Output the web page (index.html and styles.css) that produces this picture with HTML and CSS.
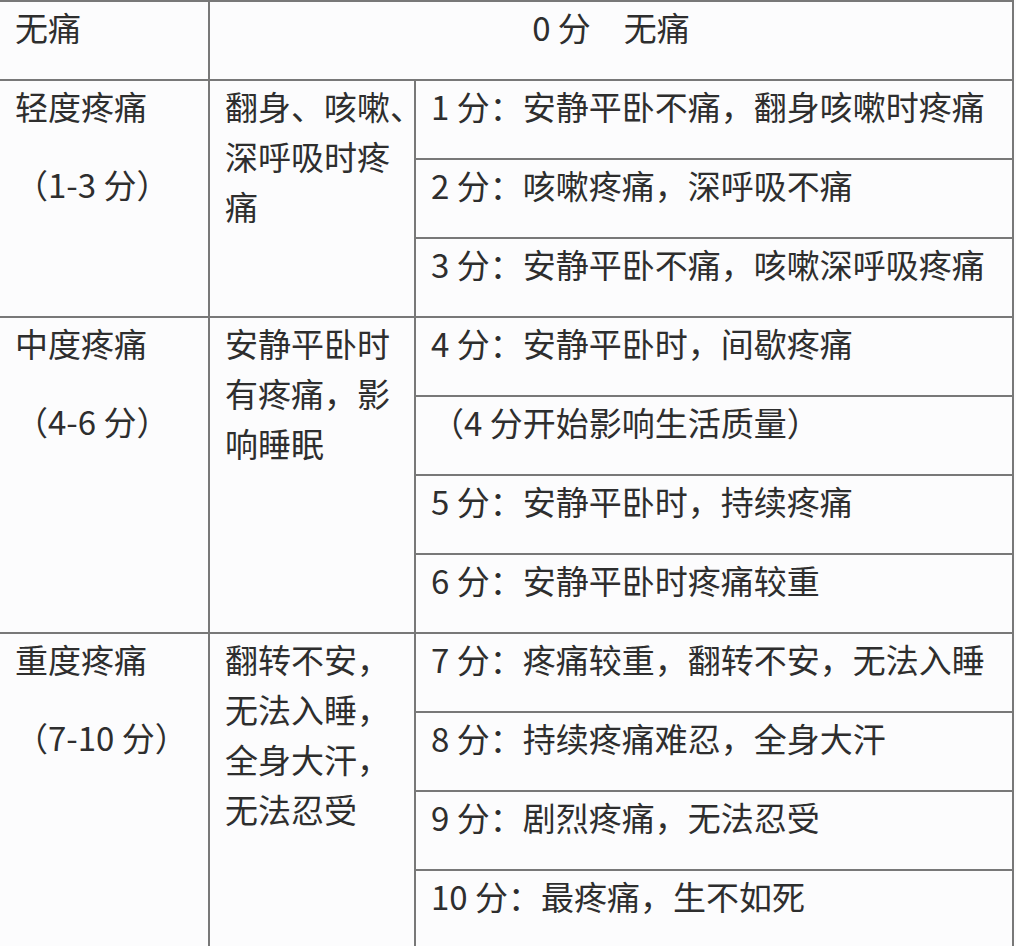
FILE: index.html
```html
<!DOCTYPE html>
<html lang="zh-CN">
<head>
<meta charset="utf-8">
<title>疼痛评分</title>
<link rel="stylesheet" href="styles.css">
</head>
<body>
<div class="table">
  <div class="cell c1 r1">无痛</div>
  <div class="cell span23 r1 center">0 分　无痛</div>

  <div class="cell c1 g1"><p>轻度疼痛</p><p class="range">（1-3 分）</p></div>
  <div class="cell c2 g1">翻身、咳嗽、<br>深呼吸时疼<br>痛</div>
  <div class="cell c3">1 分：安静平卧不痛，翻身咳嗽时疼痛</div>
  <div class="cell c3">2 分：咳嗽疼痛，深呼吸不痛</div>
  <div class="cell c3">3 分：安静平卧不痛，咳嗽深呼吸疼痛</div>

  <div class="cell c1 g2"><p>中度疼痛</p><p class="range">（4-6 分）</p></div>
  <div class="cell c2 g2">安静平卧时<br>有疼痛，影<br>响睡眠</div>
  <div class="cell c3">4 分：安静平卧时，间歇疼痛</div>
  <div class="cell c3">（4 分开始影响生活质量）</div>
  <div class="cell c3">5 分：安静平卧时，持续疼痛</div>
  <div class="cell c3">6 分：安静平卧时疼痛较重</div>

  <div class="cell c1 g3"><p>重度疼痛</p><p class="range">（7-10 分）</p></div>
  <div class="cell c2 g3">翻转不安，<br>无法入睡，<br>全身大汗，<br>无法忍受</div>
  <div class="cell c3">7 分：疼痛较重，翻转不安，无法入睡</div>
  <div class="cell c3">8 分：持续疼痛难忍，全身大汗</div>
  <div class="cell c3">9 分：剧烈疼痛，无法忍受</div>
  <div class="cell c3">10 分：最疼痛，生不如死</div>
</div>
</body>
</html>
```
FILE: styles.css
```css
html, body {
  margin: 0;
  padding: 0;
  background: #fcfcfd;
}

body {
  width: 1016px;
  height: 946px;
  overflow: hidden;
}

.table {
  width: 1014px;
  box-sizing: border-box;
  display: grid;
  grid-template-columns: 208px 204px 596px;
  grid-template-rows: repeat(12, 77px);
  gap: 2px;
  padding: 2px 2px 2px 0;
  background: #787878;
  font-family: "Noto Sans CJK SC", "Noto Sans", sans-serif;
  font-size: 33px;
  line-height: 50px;
  color: #2e2e2e;
}

.cell {
  background: #fcfcfd;
  padding: 0 0 0 15px;
  white-space: nowrap;
  overflow: visible;
}

.cell p {
  margin: 0;
}

.cell .range {
  margin-top: 28px;
}

.c1 { grid-column: 1; }
.c2 { grid-column: 2; }
.c3 { grid-column: 3; }

.span23 { grid-column: 2 / 4; }
.center { text-align: center; padding-left: 0; }

.r1 { grid-row: 1; }
.g1 { grid-row: 2 / 5; }
.g2 { grid-row: 5 / 9; }
.g3 { grid-row: 9 / 13; }
```
